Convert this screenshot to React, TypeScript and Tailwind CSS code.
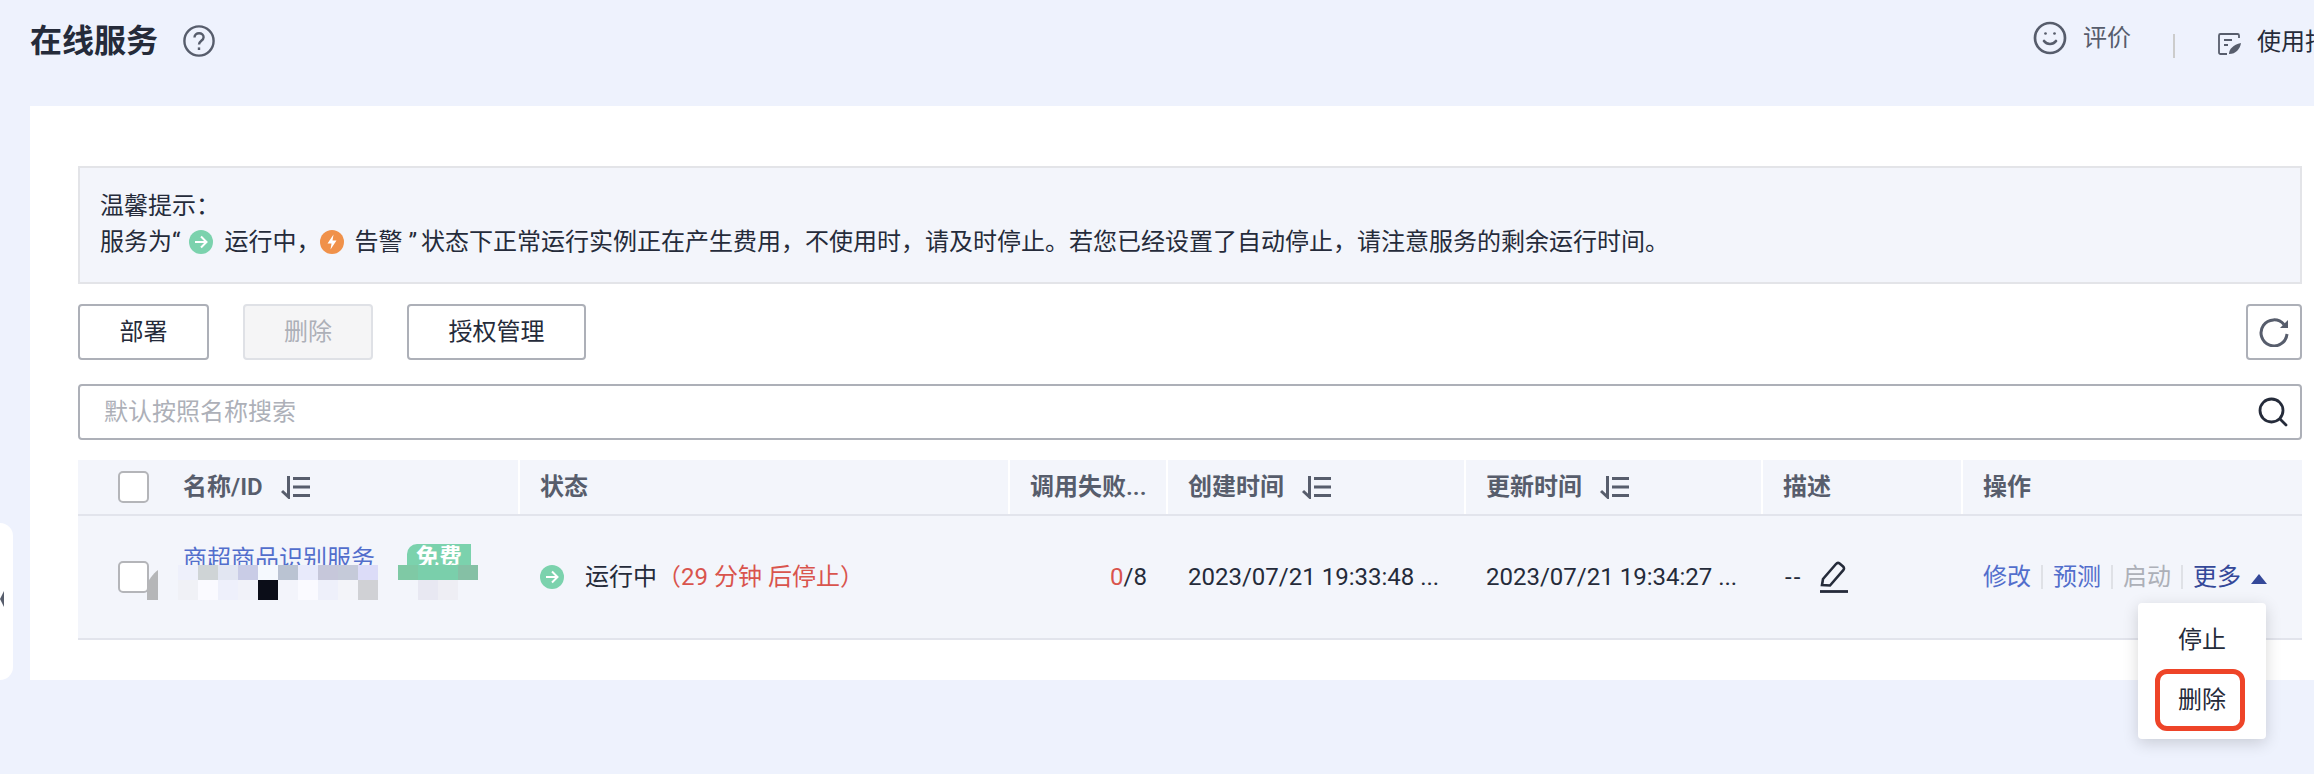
import { Smile } from 'lucide-react'

const columns = 'grid grid-cols-[440px_490px_158px_298px_297px_200px_1fr]'

const mosaicTop = ['bg-[#eef0fb]', 'bg-[#cfd4d6]', 'bg-[#e2e6f2]', 'bg-[#c9cce6]', 'bg-[#f5f9fe]', 'bg-[#bac3d2]', 'bg-[#e8eafb]', 'bg-[#c6c7da]', 'bg-[#c5cad9]', 'bg-[#dcdcf8]']
const mosaicBottom = ['bg-[#f0f1f6]', 'bg-[#fafaff]', 'bg-[#eef0fb]', 'bg-[#f1f2f9]', 'bg-[#0b0d18]', 'bg-[#f3f4fb]', 'bg-[#fafaff]', 'bg-[#eef0fa]', 'bg-[#f3f4f9]', 'bg-[#d0d1d5]']
const badgeTop = ['bg-[#7fc9a5]', 'bg-[#7acfab]', 'bg-[#7acfab]', 'bg-[#85c0a5]']
const badgeBottom = ['bg-[#f3f5fb]', 'bg-[#e8e8f2]', 'bg-[#eeeef4]', 'bg-[#f3f5fb]']

function RunningIcon() {
  return (
    <svg width="24" height="24" viewBox="0 0 24 24" className="shrink-0">
      <circle cx="12" cy="12" r="12" fill="#7bd2ad" />
      <path d="M6 12h11M12 6.500l5.500 5.500-5.500 5.500" fill="none" stroke="#fff" strokeWidth="2" />
    </svg>
  )
}

function WarningIcon() {
  return (
    <svg width="24" height="24" viewBox="0 0 24 24" className="shrink-0">
      <circle cx="12" cy="12" r="12" fill="#f0914a" />
      <path d="M13.500 4.500 7.500 13.500h4l-1 6 6-9h-4z" fill="#fff" />
    </svg>
  )
}

function SortIcon() {
  return (
    <svg width="29" height="23" viewBox="0 0 29 23" fill="none" stroke="#575d6c" strokeWidth="3" className="shrink-0">
      <path d="M7.500 0v21L1 15" />
      <path d="M12 2.500h17M12 11h17M12 19.500h17" />
    </svg>
  )
}

function Checkbox() {
  return <input type="checkbox" className="h-[32px] w-[31px] shrink-0 appearance-none rounded-[5px] border-2 border-[#b4b5b9] bg-white" />
}

function HeaderCell({ title, sort, first }: { title: string; sort?: boolean; first?: boolean }) {
  return (
    <div className={first ? 'flex items-center' : 'flex items-center border-l-2 border-white pl-[20px]'}>
      <span className="font-semibold whitespace-nowrap text-[#575d6c]">{title}</span>
      {sort && <span className="ml-[18px]"><SortIcon /></span>}
    </div>
  )
}

function Mosaic({ top, bottom }: { top: string[]; bottom: string[] }) {
  return (
    <div className="flex flex-col">
      <div className="flex h-[15px]">
        {top.map((c, i) => <div key={i} className={`w-[20px] ${c}`} />)}
      </div>
      <div className="flex h-[20px]">
        {bottom.map((c, i) => <div key={i} className={`w-[20px] ${c}`} />)}
      </div>
    </div>
  )
}

export default function App() {
  return (
    <div className="relative h-[774px] w-[2314px] overflow-hidden bg-[#eef2fd] font-['Roboto','Noto_Sans_CJK_SC',sans-serif] text-[24px] leading-[36px] text-[#252b3a]">
      <div className="flex h-[106px] pt-[24px]">
        <div className="flex w-[214px] shrink-0 items-center self-start pl-[30px]">
          <h1 className="shrink-0 text-[32px] leading-[34px] font-semibold whitespace-nowrap">在线服务</h1>
          <svg width="32" height="32" viewBox="0 0 32 32" fill="none" stroke="#575d6c" strokeWidth="2.4" className="ml-[25px] shrink-0">
            <circle cx="16" cy="16" r="14.600" />
            <path d="M11.500 12.500c0-2.600 2-4.300 4.600-4.300s4.500 1.700 4.500 4c0 3.600-4.600 3.600-4.600 7.400" />
            <path d="M16 22.400v2.600" />
          </svg>
        </div>
        <div className="ml-[1821px] flex shrink-0 items-start">
          <Smile size={36} strokeWidth={1.8} className="-mt-[4px] -ml-[3px] text-[#575d6c]" />
          <span className="-mt-[4px] ml-[15px] text-[#575d6c]">评价</span>
          <div className="mt-[10px] ml-[42px] h-[24px] w-[2px] bg-[#cccccc]" />
          <svg width="24" height="24" viewBox="0 0 24 24" fill="none" stroke="#575d6c" strokeWidth="1.8" className="mt-[8px] ml-[43px]">
            <path d="M9 22H2.500a1.500 1.500 0 0 1-1.500-1.500V3.500A1.500 1.500 0 0 1 2.500 2h17A1.500 1.500 0 0 1 21 3.500V6" />
            <path d="M6 8h8M6 13h4" />
            <path d="M11 22c0-5 4-9 12-11-1 6-5 11-12 11z" fill="#575d6c" stroke="none" />
          </svg>
          <span className="ml-[15px] whitespace-nowrap">使用指南</span>
        </div>
      </div>

      <main className="ml-[30px] h-[574px] bg-white pt-[60px] pr-[12px] pl-[48px]">
        <div className="h-[118px] border-2 border-[#e3e4e8] bg-[#f3f5fb] pt-[20px] pl-[20px]">
          <p>温馨提示：</p>
          <p className="flex items-center whitespace-nowrap">
            服务为“<span className="ml-[9px]"><RunningIcon /></span>
            <span className="ml-[11px]">运行中，</span>
            <WarningIcon />
            <span className="ml-[10px]">告警 ”<span className="ml-[4px]">状态下正常运行实例正在产生费用，不使用时，请及时停止。若您已经设置了自动停止，请注意服务的剩余运行时间。</span></span>
          </p>
        </div>

        <div className="mt-[20px] flex gap-[34px]">
          <button className="h-[56px] w-[131px] rounded-[4px] border-2 border-[#adb0b8] bg-white">部署</button>
          <button className="h-[56px] w-[130px] rounded-[4px] border-2 border-[#dfe1e6] bg-[#f5f5f6] text-[#adb0b8]">删除</button>
          <button className="h-[56px] w-[179px] rounded-[4px] border-2 border-[#adb0b8] bg-white">授权管理</button>
          <button className="ml-auto flex h-[56px] w-[56px] items-center justify-center rounded-[4px] border-2 border-[#adb0b8] bg-white">
            <svg width="30" height="30" viewBox="0 0 30 30" fill="none">
              <path d="M25 7.500A13 13 0 1 0 28 17" stroke="#575d6c" strokeWidth="3" />
              <path d="M29 3v8h-8z" fill="#575d6c" />
            </svg>
          </button>
        </div>

        <div className="mt-[24px] flex h-[56px] items-center rounded-[4px] border-2 border-[#adb0b8] bg-white pr-[12px] pl-[24px]">
          <input placeholder="默认按照名称搜索" className="min-w-0 flex-1 bg-transparent outline-none placeholder:text-[#adb0b8]" />
          <svg width="30" height="30" viewBox="0 0 30 30" fill="none" stroke="#252b3a" strokeWidth="2.8" strokeLinecap="round">
            <circle cx="13.500" cy="13.500" r="11.500" />
            <path d="M22 22l6 6" />
          </svg>
        </div>

        <div className="mt-[20px] bg-[#f3f5fb]">
          <div className={`${columns} h-[56px] border-b-2 border-[#e2e4ec]`}>
            <div className="flex items-center gap-[34px] pl-[40px]">
              <Checkbox />
              <HeaderCell title="名称/ID" sort first />
            </div>
            <HeaderCell title="状态" />
            <HeaderCell title="调用失败..." />
            <HeaderCell title="创建时间" sort />
            <HeaderCell title="更新时间" sort />
            <HeaderCell title="描述" />
            <HeaderCell title="操作" />
          </div>

          <div className={`${columns} relative h-[124px] border-b-2 border-[#e2e4ec]`}>
            <div className="relative flex items-start pt-[27px] pl-[40px]">
              <div className="mt-[18px] flex"><Checkbox /></div>
              <span className="ml-[34px] leading-[32px] whitespace-nowrap text-[#526ecc]">商超商品识别服务</span>
              <span className="mt-[1px] ml-[32px] h-[34px] w-[64px] rounded-tl-[10px] bg-[#7bd2ad] text-center text-[23px] leading-[28px] font-bold text-white">免费</span>
              <svg width="11" height="30" viewBox="0 0 11 30" className="absolute top-[54px] left-[69px]">
                <path d="M11 0v30H0V16C1 10 6 4 11 0z" fill="#b5b6b8" />
              </svg>
              <div className="absolute top-[49px] left-[100px]"><Mosaic top={mosaicTop} bottom={mosaicBottom} /></div>
              <div className="absolute top-[49px] left-[320px]"><Mosaic top={badgeTop} bottom={badgeBottom} /></div>
            </div>

            <div className="flex items-center pl-[22px]">
              <RunningIcon />
              <span className="ml-[21px]">运行中</span>
              <span className="whitespace-nowrap text-[#d9544d]">（29 分钟 后停止）</span>
            </div>
            <div className="flex items-center justify-end pr-[19px]">
              <span className="text-[#d9544d]">0</span>/8
            </div>
            <div className="flex items-center pl-[22px] whitespace-nowrap">2023/07/21 19:33:48 ...</div>
            <div className="flex items-center pl-[22px] whitespace-nowrap">2023/07/21 19:34:27 ...</div>
            <div className="flex items-center pl-[24px]">
              <span className="tracking-[2px]">--</span>
              <svg width="30" height="32" viewBox="0 0 30 32" fill="none" stroke="#252b3a" strokeWidth="2.6" className="ml-[17px]">
                <path d="M3 24l1-6L17 3c1-1.200 2.500-1.400 3.600-.5l3.500 3c1.100 1 1.200 2.500.2 3.600L11 24.500z" />
                <path d="M1 30.500h28" strokeWidth="2.8" />
              </svg>
            </div>
            <div className="flex items-center pl-[22px] whitespace-nowrap text-[#526ecc]">
              <span>修改</span>
              <span className="mx-[10px] h-[24px] w-[2px] bg-[#dfe1e6]" />
              <span>预测</span>
              <span className="mx-[10px] h-[24px] w-[2px] bg-[#dfe1e6]" />
              <span className="text-[#adb0b8]">启动</span>
              <span className="mx-[10px] h-[24px] w-[2px] bg-[#dfe1e6]" />
              <span className="text-[#344899]">更多</span>
              <span className="mt-[4px] ml-[10px] h-0 w-0 border-x-[8px] border-b-[10px] border-x-transparent border-b-[#344899]" />
            </div>

            <div className="absolute top-[87px] right-[36px] flex h-[136px] w-[128px] flex-col rounded-[4px] bg-white pt-[7px] shadow-[0_4px_16px_rgba(0,0,0,0.16)]">
              <div className="flex h-[60px] items-center justify-center">停止</div>
              <div className="flex h-[60px] items-center justify-center">删除</div>
              <div className="absolute top-[66px] left-[17px] h-[62px] w-[90px] rounded-[12px] border-[5px] border-[#ee4428]" />
            </div>
          </div>
        </div>
      </main>

      <div className="absolute top-[523px] left-0 flex h-[157px] w-[13px] items-center rounded-r-[14px] bg-white">
        <span className="mt-[-5px] h-0 w-0 border-y-[8px] border-r-[4px] border-y-transparent border-r-[#575d6c]" />
      </div>
    </div>
  )
}
